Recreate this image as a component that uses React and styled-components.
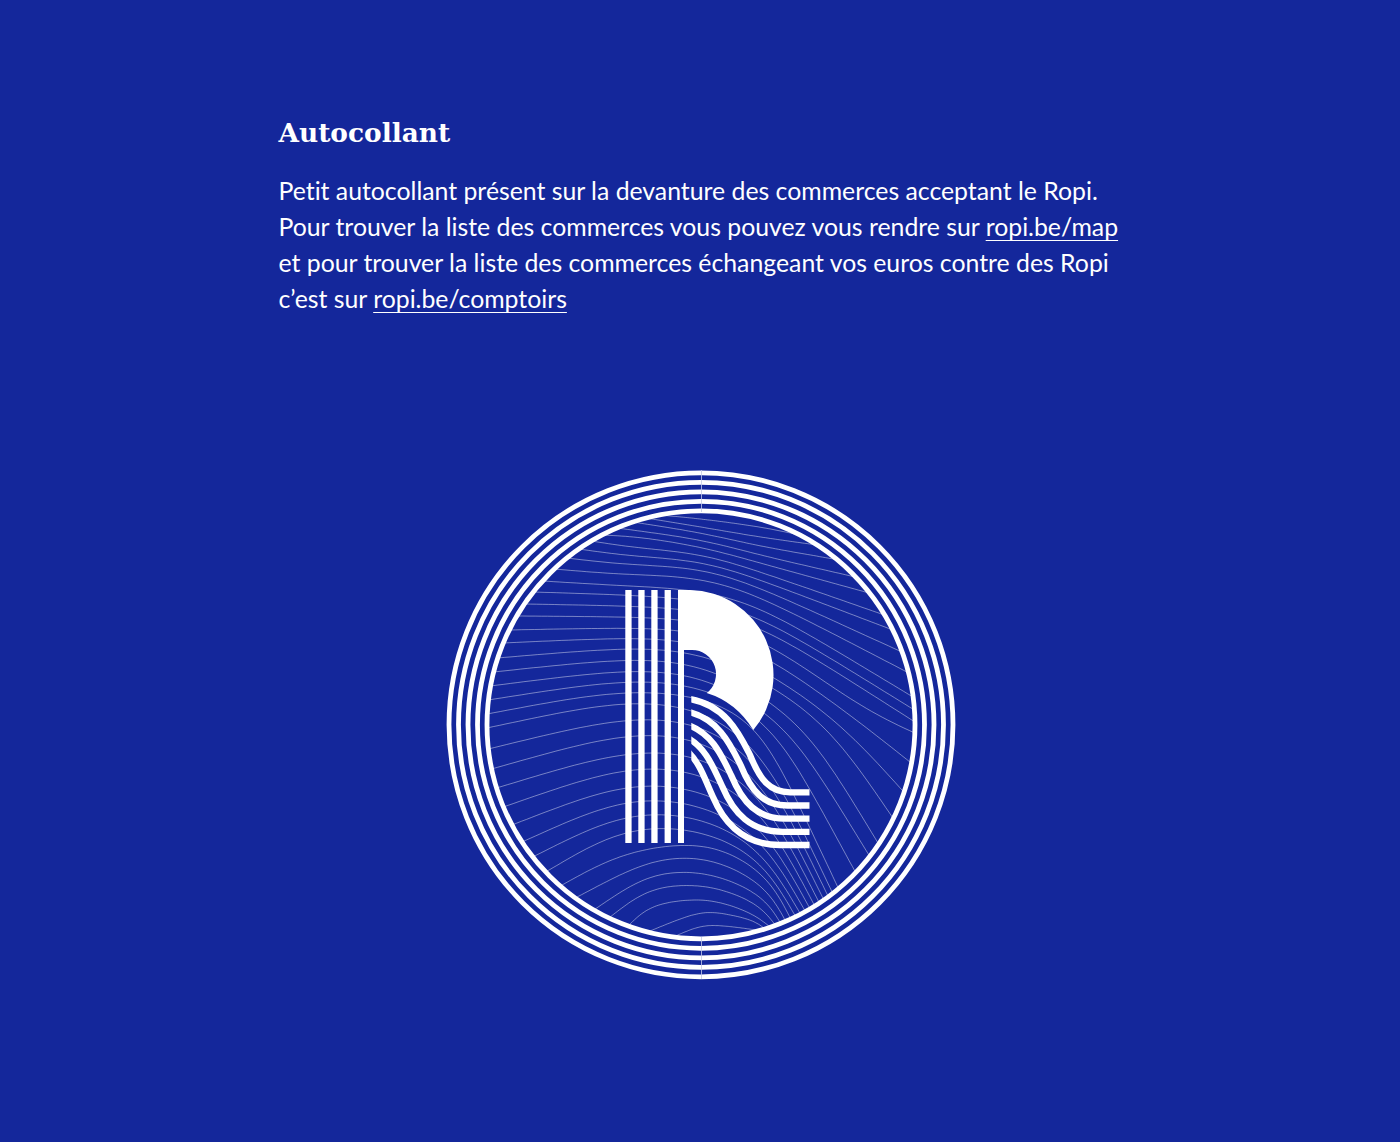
import React from "react";
import styled, { createGlobalStyle } from "styled-components";

const Global = createGlobalStyle`
  html, body { margin: 0; padding: 0; background: #14279b; }
`;

const Page = styled.main`
  width: 1400px;
  height: 1142px;
  background: #14279b;
  color: #fff;
  display: flex;
  flex-direction: column;
  align-items: center;
  overflow: hidden;
`;

const Copy = styled.section`
  width: 844px;
  padding-top: 113px;
  margin-left: 1px;
`;

const Title = styled.h2`
  margin: 0 0 21px;
  font-family: "DejaVu Serif", serif;
  font-weight: 700;
  font-size: 26.4px;
  line-height: 39px;
`;

const Text = styled.p`
  margin: 0;
  font-family: "Lato", sans-serif;
  font-size: 24.8px;
  line-height: 36px;
  font-variant-ligatures: none;
  white-space: nowrap;
`;

const Link = styled.a`
  color: #fff;
  text-decoration: underline;
  text-decoration-thickness: 1px;
  text-underline-offset: 4px;
`;

const LogoWrap = styled.div`
  margin-top: 148px;
  margin-left: 2px;
`;

const Logo = styled.svg`
  display: block;
  width: 520px;
  height: 520px;
`;

const cx = 701, cy = 724.8;
const R = 214;

const LY = [515,518,522,528,535,541,549,558,569,581,592,604,616,630,643,658,672,686,700,714,728,749,769,788,807,825,842,857,872,886,898,910,918,926,932,937];
const MID = [
  [[701,519],[760,527]],
  [[701,527],[760,537]],
  [[701,533],[760,546]],
  [[701,540],[760,555]],
  [[625,535],[701,547],[760,563]],
  [[625,547],[701,554],[760,572]],
  [[625,556],[701,561],[760,580]],
  [[625,565],[701,568],[760,588]],
  [[625,575],[701,577],[760,597]],
  [[625,586],[701,590],[760,607]],
  [[625,595],[701,600],[760,617]],
  [[625,606],[701,610],[760,626]],
  [[625,617],[701,620],[760,638],[880,720]],
  [[625,628],[701,630],[760,652],[857,720]],
  [[625,638],[701,640],[760,668],[837,720]],
  [[625,648],[701,650],[760,680],[823,720]],
  [[625,659],[701,661],[750,690],[800,720]],
  [[625,670],[701,672],[745,700],[783,720]],
  [[625,680],[701,683],[740,705],[770,720]],
  [[625,690],[701,695],[735,707],[757,720]],
  [[625,701],[701,708],[760,750]],
  [[625,718],[701,722],[760,765]],
  [[625,734],[701,738],[760,780]],
  [[625,752],[701,755],[760,795]],
  [[625,768],[701,772],[760,810]],
  [[625,785],[701,790],[760,825]],
  [[625,800],[701,805],[760,838]],
  [[625,815],[701,818],[760,850]],
  [[625,830],[701,831],[760,860]],
  [[625,853],[701,843],[730,852],[770,878]],
  [[650,861],[701,857],[730,866],[770,890]],
  [[650,875],[701,872],[730,880],[770,901]],
  [[650,889],[701,885],[730,892],[765,908]],
  [[650,906],[701,899],[730,905],[760,917]],
  [[701,912],[730,915],[760,922]],
  [[701,926],[725,926]],
];
const RP = [
  [800,535],[817,545],[835,562],[855,578],[870,593],[885,615],[893,630],[903,652],[908,673],[914,697],[915,710],[915,722],
  [913,733],[910,763],[903,792],[892,818],[877,843],[868,855],[855,872],[838,888],
];
const FAN_START = 52, FAN_END = 74;

function sampleSpline(p) {
  const out = [];
  for (let i = 0; i < p.length - 1; i++) {
    const a = p[i - 1] || p[i], b = p[i], c = p[i + 1], e = p[i + 2] || c;
    for (let s = 0; s < 14; s++) {
      const t = s / 14, t2 = t * t, t3 = t2 * t;
      out.push([0, 1].map((k) =>
        0.5 * (2 * b[k] + (c[k] - a[k]) * t + (2 * a[k] - 5 * b[k] + 4 * c[k] - e[k]) * t2 + (3 * b[k] - a[k] - 3 * c[k] + e[k]) * t3)
      ));
    }
  }
  out.push(p[p.length - 1]);
  return out;
}

function resample(pts, n) {
  const lens = [0];
  for (let i = 1; i < pts.length; i++) lens.push(lens[i - 1] + Math.hypot(pts[i][0] - pts[i - 1][0], pts[i][1] - pts[i - 1][1]));
  const total = lens[lens.length - 1];
  const out = [];
  let j = 0;
  for (let i = 0; i <= n; i++) {
    const d = (total * i) / n;
    while (j < pts.length - 2 && lens[j + 1] < d) j++;
    const f = (d - lens[j]) / (lens[j + 1] - lens[j] || 1);
    out.push([pts[j][0] + (pts[j + 1][0] - pts[j][0]) * f, pts[j][1] + (pts[j + 1][1] - pts[j][1]) * f]);
  }
  return out;
}

function smooth(pts, rounds) {
  let cur = pts;
  for (let r = 0; r < rounds; r++) {
    cur = cur.map((p, i) => {
      if (i === 0 || i === cur.length - 1) return p;
      return [(cur[i - 1][0] + 2 * p[0] + cur[i + 1][0]) / 4, (cur[i - 1][1] + 2 * p[1] + cur[i + 1][1]) / 4];
    });
  }
  return cur;
}

const contours = LY.map((ly, i) => {
  const dy = ly - cy;
  const lx = cx - Math.sqrt(Math.max(0, R * R - dy * dy));
  let hit;
  if (i < RP.length) {
    const vx = RP[i][0] - cx, vy = RP[i][1] - cy;
    const l = Math.hypot(vx, vy);
    hit = [cx + (vx / l) * R, cy + (vy / l) * R];
  } else {
    const t = (i - RP.length) / (LY.length - 1 - RP.length);
    const a = ((FAN_START + (FAN_END - FAN_START) * t) * Math.PI) / 180;
    hit = [cx + R * Math.cos(a), cy + R * Math.sin(a)];
  }
  const mids = MID[i].filter(([x]) => x > lx + 6);
  const raw = sampleSpline([[lx, ly], ...mids, hit]);
  const line = smooth(resample(raw, 70), 90);
  return line.map((p, k) => `${k ? "L" : "M"}${p[0].toFixed(1)} ${p[1].toFixed(1)}`).join("");
});

const waveA = [[686, 698.5], [725, 703], [740, 735], [750, 755], [760, 780], [770, 792.3], [790, 792.3], [809.5, 792.3]];
const waveB = [[686, 750], [700, 762], [705, 780], [713, 797], [725, 825], [745, 845], [780, 845], [809.5, 845]];

const waves = [0, 1, 2, 3, 4].map((i) => {
  const t = i / 4;
  const p = waveA.map((a, k) => [a[0] + (waveB[k][0] - a[0]) * t, a[1] + (waveB[k][1] - a[1]) * t].map((v) => v.toFixed(1)).join(" "));
  return `M${p[0]}C${p[1]} ${p[2]} ${p[3]}C${p[4]} ${p[5]} ${p[6]}L${p[7]}`;
});

const bars = [625.3, 638.3, 651.3, 664.6];
const rings = [252, 242.5, 233, 223.5, 214];

export default function App() {
  return (
    <Page>
      <Global />
      <Copy>
        <Title>Autocollant</Title>
        <Text>
          Petit autocollant présent sur la devanture des commerces acceptant le Ropi.
          <br />
          Pour trouver la liste des commerces vous pouvez vous rendre sur <Link>ropi.be/map</Link>
          <br />
          et pour trouver la liste des commerces échangeant vos euros contre des Ropi
          <br />
          c’est sur <Link>ropi.be/comptoirs</Link>
        </Text>
      </Copy>
      <LogoWrap>
        <Logo viewBox="441 465 520 520" aria-label="Ropi">
          <defs>
            <clipPath id="inner">
              <circle cx={cx} cy={cy} r="213" />
            </clipPath>
            <clipPath id="waveClip">
              <rect x="691.3" y="680" width="130" height="180" />
            </clipPath>
          </defs>
          <g clipPath="url(#inner)" fill="none" stroke="#fff" strokeOpacity="0.48" strokeWidth="0.9">
            {contours.map((d, i) => (
              <path key={i} d={d} />
            ))}
          </g>
          <g fill="none" stroke="#fff" strokeWidth="4.8">
            {rings.map((r) => (
              <circle key={r} cx={cx} cy={cy} r={r} />
            ))}
          </g>
          <path d="M701.5 470V512M701.5 937V979" stroke="#c3c8e6" strokeWidth="0.8" />
          <g fill="#fff">
            {bars.map((x) => (
              <rect key={x} x={x} y="590" width="6.3" height="253" />
            ))}
            <path d="M678 590H690A85 85 0 0 1 753.3 730Q736 702 706.7 693A24 24 0 0 0 692 650H684V843H678Z" />
          </g>
          <g clipPath="url(#waveClip)" fill="none" stroke="#fff" strokeWidth="6.3">
            {waves.map((d, i) => (
              <path key={i} d={d} />
            ))}
          </g>
        </Logo>
      </LogoWrap>
    </Page>
  );
}
